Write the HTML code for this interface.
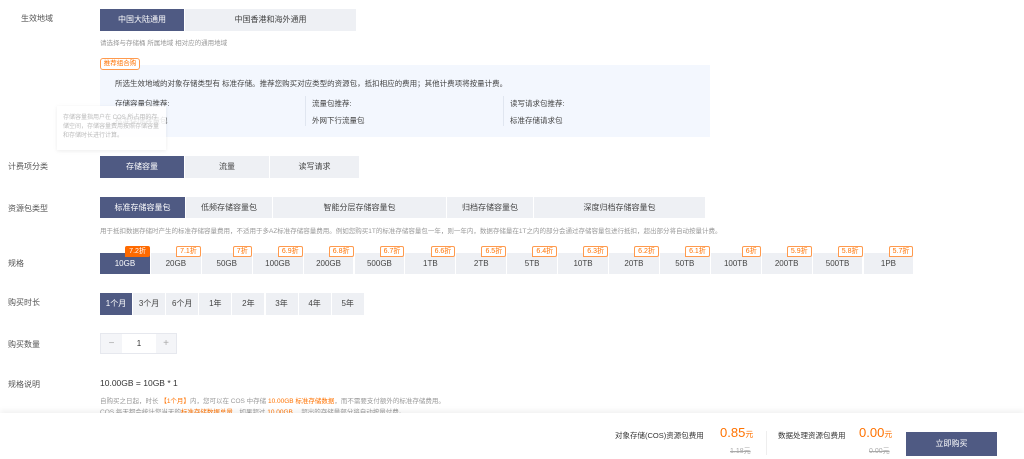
<!DOCTYPE html>
<html><head><meta charset="utf-8"><style>
*{margin:0;padding:0;box-sizing:border-box}
body{width:1024px;height:459px;overflow:hidden;background:#fff;font-family:"Liberation Sans","Noto Sans CJK SC",sans-serif;font-size:8px;color:#333;position:relative}
.a{position:absolute;white-space:nowrap}
.lbl{color:#555;font-size:8px}
.b{position:absolute;background:#eef0f4;color:#444;text-align:center;font-size:8px;border-right:1px solid #fff}
.s{background:#4f5a83;color:#fff}
.g{color:#999;font-size:6.5px}
.o{color:#ff7200}
.bd{position:absolute;height:11px;font-size:7px;line-height:9px;padding:0 3px;border:1px solid #ff9a4d;background:#fff;color:#ff7200;border-radius:2px 2px 2px 0}
</style></head><body>
<div class="a lbl" style="left:21px;top:13px">生效地域</div>
<div class="b s" style="left:100px;top:9px;width:85px;height:22px;line-height:22px">中国大陆通用</div>
<div class="b" style="left:185px;top:9px;width:172px;height:22px;line-height:22px">中国香港和海外通用</div>
<div class="a g" style="left:100px;top:37px">请选择与存储桶 所属地域 相对应的通用地域</div>

<div class="a" style="left:100px;top:65px;width:610px;height:72px;background:#f3f7fe"></div>
<div class="a" style="left:100px;top:58px;height:12px;width:40px;border:1px solid #ff9a4d;border-radius:3px;background:#fff;color:#ff7200;font-size:6.5px;line-height:10px;text-align:center">推荐组合购</div>
<div class="a" style="left:115px;top:78px;font-size:7.5px;color:#444">所选生效地域的对象存储类型有 标准存储。推荐您购买对应类型的资源包，抵扣相应的费用；其他计费项将按量计费。</div>
<div class="a" style="left:115px;top:98px;font-size:7.5px;color:#444">存储容量包推荐:</div>
<div class="a" style="left:312px;top:98px;font-size:7.5px;color:#444">流量包推荐:</div>
<div class="a" style="left:510px;top:98px;font-size:7.5px;color:#444">读写请求包推荐:</div>
<div class="a" style="left:115px;top:115px;font-size:7.5px;color:#444">标准存储容量包</div>
<div class="a" style="left:312px;top:115px;font-size:7.5px;color:#444">外网下行流量包</div>
<div class="a" style="left:510px;top:115px;font-size:7.5px;color:#444">标准存储请求包</div>
<div class="a" style="left:305px;top:96px;width:1px;height:30px;background:#e0e6f0"></div>
<div class="a" style="left:503px;top:96px;width:1px;height:30px;background:#e0e6f0"></div>
<div class="a" style="left:57px;top:106px;width:109px;height:44px;background:rgba(255,255,255,.85);box-shadow:0 1px 4px rgba(0,0,0,.08);padding:8px 6px;font-size:6px;color:#bbb;white-space:normal;line-height:9px">存储容量指用户在 COS 所占用的存储空间，存储容量费用按照存储容量和存储时长进行计算。</div>

<div class="a lbl" style="left:8px;top:161px">计费项分类</div>
<div class="b s" style="left:100px;top:156px;width:85px;height:22px;line-height:22px">存储容量</div>
<div class="b" style="left:185px;top:156px;width:85px;height:22px;line-height:22px">流量</div>
<div class="b" style="left:270px;top:156px;width:90px;height:22px;line-height:22px">读写请求</div>

<div class="a lbl" style="left:8px;top:203px">资源包类型</div>
<div class="b s" style="left:100px;top:197px;width:86px;height:21px;line-height:21px">标准存储容量包</div>
<div class="b" style="left:186px;top:197px;width:87px;height:21px;line-height:21px">低频存储容量包</div>
<div class="b" style="left:273px;top:197px;width:174px;height:21px;line-height:21px">智能分层存储容量包</div>
<div class="b" style="left:447px;top:197px;width:87px;height:21px;line-height:21px">归档存储容量包</div>
<div class="b" style="left:534px;top:197px;width:172px;height:21px;line-height:21px">深度归档存储容量包</div>
<div class="a g" style="left:100px;top:225px">用于抵扣数据存储时产生的标准存储容量费用，不适用于多AZ标准存储容量费用。例如您购买1T的标准存储容量包一年，则一年内，数据存储量在1T之内的部分会通过存储容量包进行抵扣，超出部分将自动按量计费。</div>

<div class="a lbl" style="left:8px;top:258px">规格</div>
<div id="sp"></div>

<div class="a lbl" style="left:8px;top:297px">购买时长</div>
<div id="du"></div>

<div class="a lbl" style="left:8px;top:339px">购买数量</div>
<div class="a" style="left:100px;top:333px;width:77px;height:21px;border:1px solid #e6e8ee;background:#fff"></div>
<div class="a" style="left:101px;top:334px;width:21px;height:19px;background:#f4f5f8;color:#aaa;text-align:center;line-height:19px;font-size:10px">−</div>
<div class="a" style="left:156px;top:334px;width:20px;height:19px;background:#f4f5f8;color:#aaa;text-align:center;line-height:19px;font-size:10px">+</div>
<div class="a" style="left:122px;top:334px;width:34px;height:19px;text-align:center;line-height:19px;font-size:8px">1</div>

<div class="a lbl" style="left:8px;top:379px">规格说明</div>
<div class="a" style="left:100px;top:378px;font-size:8.5px">10.00GB = 10GB * 1</div>
<div class="a g" style="left:100px;top:395px">自购买之日起，时长 <span class="o">【1个月】</span>内，您可以在 COS 中存储 <span class="o">10.00GB 标准存储数据</span>，而不需要支付额外的标准存储费用。</div>
<div class="a g" style="left:100px;top:406px">COS 每天都会统计您当天的<span class="o">标准存储数据总量</span>，如果超过 <span class="o">10.00GB</span> ，超出的存储量部分将自动按量付费。</div>

<div class="a" style="left:0;top:413px;width:1024px;height:46px;background:#fff;box-shadow:0 -3px 5px rgba(0,0,0,.05)"></div>
<div class="a" style="left:615px;top:430px;font-size:7.5px">对象存储(COS)资源包费用</div>
<div class="a o" style="left:720px;top:425px;font-size:13px">0.85<span style="font-size:8px">元</span></div>
<div class="a" style="left:730px;top:446px;font-size:7px;color:#aaa;text-decoration:line-through">1.18元</div>
<div class="a" style="left:766px;top:431px;width:1px;height:24px;background:#eee"></div>
<div class="a" style="left:778px;top:430px;font-size:7.5px">数据处理资源包费用</div>
<div class="a o" style="left:859px;top:425px;font-size:13px">0.00<span style="font-size:8px">元</span></div>
<div class="a" style="left:869px;top:446px;font-size:7px;color:#aaa;text-decoration:line-through">0.00元</div>
<div class="a" style="left:906px;top:432px;width:91px;height:24px;background:#4f5a83;color:#fff;text-align:center;line-height:24px;font-size:8px">立即购买</div>

<script>
var n=['10GB','20GB','50GB','100GB','200GB','500GB','1TB','2TB','5TB','10TB','20TB','50TB','100TB','200TB','500TB','1PB'];
var d=['7.2折','7.1折','7折','6.9折','6.8折','6.7折','6.6折','6.5折','6.4折','6.3折','6.2折','6.1折','6折','5.9折','5.8折','5.7折'];
var h='',w=50.9;
for(var i=0;i<16;i++){var x=100+i*w;
h+='<div class="b'+(i==0?' s':'')+'" style="left:'+x+'px;top:253px;width:'+w+'px;height:21px;line-height:21px">'+n[i]+'</div>';
h+='<div class="bd" style="right:'+(1024-x-w+1)+'px;top:246px;'+(i==0?'background:#ff6a00;color:#fff;border-color:#ff6a00':'')+'">'+d[i]+'</div>';}
document.getElementById('sp').innerHTML=h;
var u=['1个月','3个月','6个月','1年','2年','3年','4年','5年'];h='';
for(i=0;i<8;i++)h+='<div class="b'+(i==0?' s':'')+'" style="left:'+(100+i*33.1)+'px;top:293px;width:33px;height:22px;line-height:22px">'+u[i]+'</div>';
document.getElementById('du').innerHTML=h;
</script>
</body></html>
